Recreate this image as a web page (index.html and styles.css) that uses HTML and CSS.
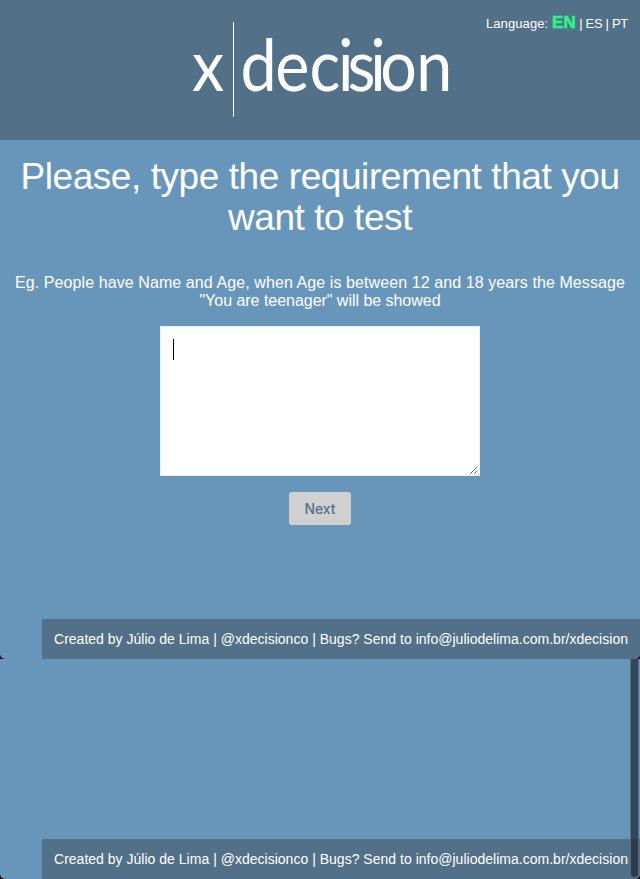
FILE: index.html
```html
<!DOCTYPE html>
<html lang="en">
<head>
<meta charset="utf-8">
<title>xdecision</title>
<link rel="stylesheet" href="styles.css">
</head>
<body>
<div class="window">
<section class="screen">
  <header class="header">
    <svg class="logo" width="260" height="100" viewBox="190 20 260 100" aria-label="xdecision">
      <text class="wordmark" transform="scale(.91 1)" y="91.5" x="211 264.2 302.6 340 371.5 382 407 418 457.3">xdecision</text>
      <rect x="233" y="22" width="1" height="95" fill="#fff"/>
    </svg>
    <nav class="languages">Language: <b>EN</b><span class="others"> | ES | PT</span></nav>
  </header>
  <main class="content">
    <h1>Please, type the requirement that you<br>want to test</h1>
    <p class="example">Eg. People have Name and Age, when Age is between 12 and 18 years the Message<br><span class="quote">"You are teenager" will be showed</span></p>
    <div class="editor">
      <span class="caret"></span>
      <svg class="grip" width="8" height="8" viewBox="0 0 8 8"><path d="M.5 7.5l7-7M4.5 7.5l3-3" stroke="#555" stroke-width=".9" fill="none"/></svg>
    </div>
    <button class="next">Next</button>
  </main>
  <footer class="footer">Created by Júlio de Lima | @xdecisionco | Bugs? Send to info@juliodelima.com.br/xdecision</footer>
</section>
</div>
<div class="window">
<section class="screen lower">
  <footer class="footer">Created by Júlio de Lima | @xdecisionco | Bugs? Send to info@juliodelima.com.br/xdecision</footer>
  <div class="scrollbar"></div>
</section>
</div>
</body>
</html>
```
FILE: styles.css
```css
body { margin: 0; background: #6896bb; color: #fff; font-family: "Liberation Sans", Arial, sans-serif; }
.window { background: #000; }
.screen { position: relative; display: flex; flex-direction: column; height: 659px; background: #6896bb; border-radius: 0 0 5px 5px; overflow: hidden; }
.lower { height: 220px; }
.header { position: relative; height: 140px; flex: none; background: #527088; display: flex; justify-content: center; }
.logo { display: block; margin-top: 20px; overflow: visible; }
.wordmark { font-family: Lato, sans-serif; font-weight: 400; font-size: 71px; fill: #fff; }
.languages { position: absolute; right: 12px; top: 13px; font-size: 13px; line-height: 20px; letter-spacing: .1px; white-space: nowrap; }
.languages b { font-size: 17px; color: #2cf587; -webkit-text-stroke: .6px #2cf587; }
.others { letter-spacing: -.3px; }
.content { flex: 1; display: flex; flex-direction: column; align-items: center; text-align: center; white-space: nowrap; }
h1 { margin: 16px 0 0; font-size: 37px; line-height: 41px; font-weight: 400; letter-spacing: -.43px; }
.example { margin: 36px 0 0; font-size: 16px; line-height: 18px; letter-spacing: .09px; }
.quote { letter-spacing: -.03px; }
.editor { position: relative; box-sizing: border-box; width: 320px; height: 150px; margin-top: 16px; padding: 12px; background: #fff; border: 1px solid #eee; }
.caret { display: block; width: 1px; height: 21px; background: #000; }
.grip { position: absolute; right: 1px; bottom: 1px; }
.next { width: 62px; height: 33px; margin-top: 16px; padding: 0; border: 0; border-radius: 3px; background: #d0d0d0; color: #527088; font: 500 14px Inter, sans-serif; letter-spacing: -.1px; }
.footer { align-self: flex-end; margin-top: auto; box-sizing: border-box; width: 598px; height: 40px; padding-left: 12px; background: #527088; font-size: 14px; line-height: 40px; letter-spacing: .015px; white-space: nowrap; }
.scrollbar { position: absolute; box-sizing: border-box; right: 1px; top: -8px; bottom: 1px; width: 9px; background: rgba(33, 43, 54, .75); border: 1px solid rgba(150, 175, 195, .4); border-radius: 5px; }
```
